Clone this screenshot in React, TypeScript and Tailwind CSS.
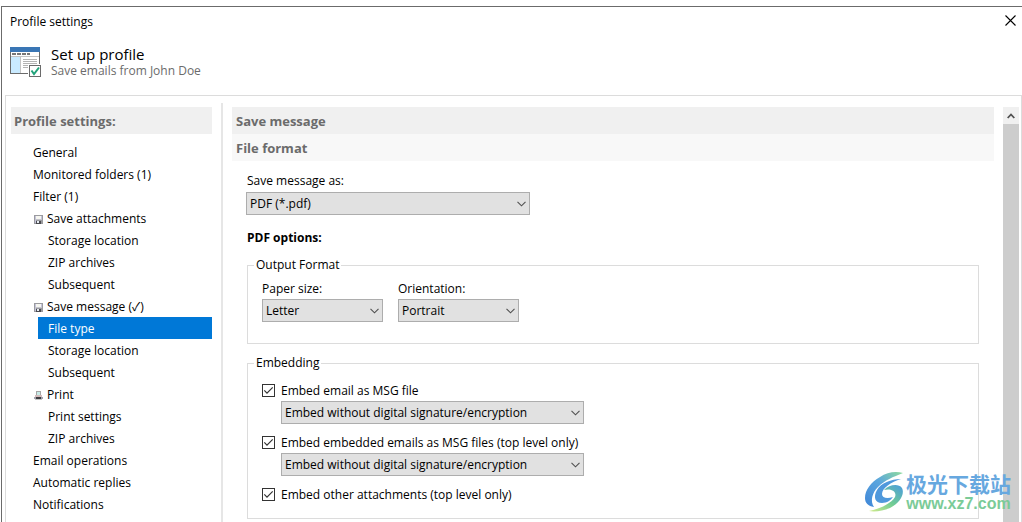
import type { ReactNode } from "react";

type TreeItem = { label: string; level: "root" | "group" | "child"; icon?: "disk" | "printer"; active?: boolean };

const TREE: TreeItem[] = [
  { label: "General", level: "root" },
  { label: "Monitored folders (1)", level: "root" },
  { label: "Filter (1)", level: "root" },
  { label: "Save attachments", level: "group", icon: "disk" },
  { label: "Storage location", level: "child" },
  { label: "ZIP archives", level: "child" },
  { label: "Subsequent", level: "child" },
  { label: "Save message (✓)", level: "group", icon: "disk" },
  { label: "File type", level: "child", active: true },
  { label: "Storage location", level: "child" },
  { label: "Subsequent", level: "child" },
  { label: "Print", level: "group", icon: "printer" },
  { label: "Print settings", level: "child" },
  { label: "ZIP archives", level: "child" },
  { label: "Email operations", level: "root" },
  { label: "Automatic replies", level: "root" },
  { label: "Notifications", level: "root" },
];

function ProfileIcon() {
  return (
    <svg width="32" height="32" viewBox="0 0 32 32" shapeRendering="crispEdges" aria-hidden="true">
      <rect x="0" y="2" width="30" height="27" fill="#6b6b6b" />
      <rect x="1" y="7" width="28" height="21" fill="#fff" />
      <rect x="0" y="2" width="30" height="5" fill="#3a76b5" />
      <path d="M2 8h4v2H2zM7 8h4v2H7zM12 8h4v2h-4zM17 8h3v2h-3z" fill="#777" />
      <rect x="1" y="12" width="9" height="16" fill="#c9eaff" />
      <path d="M1 11.5h28M10.5 12v16" stroke="#c4c4c4" />
      <path d="M13 14.5h14M13 16.5h14M13 18.5h14M13 20.5h6M13 22.5h6" stroke="#b4b4b4" />
      <rect x="18" y="19" width="14" height="13" fill="#fff" />
      <rect x="19.5" y="20.5" width="11" height="11" fill="#fff" stroke="#6b6b6b" />
      <path d="M21.5 25.5l2.5 3.5 5-6.5" fill="none" stroke="#21a37a" strokeWidth="2" shapeRendering="auto" />
    </svg>
  );
}

function DiskIcon() {
  return (
    <svg width="9" height="9" viewBox="0 0 9 9" shapeRendering="crispEdges" aria-hidden="true">
      <rect width="9" height="9" fill="#9b9b9f" />
      <rect x="1" y="1" width="1" height="7" fill="#c4c4dc" />
      <rect x="2" y="1" width="5" height="3" fill="#f6f6f0" />
      <rect x="7" y="1" width="1" height="3" fill="#c4c4dc" />
      <rect x="1" y="4" width="7" height="1" fill="#c5c5cd" />
      <rect x="2" y="6" width="5" height="3" fill="#4b4b50" />
      <rect x="3" y="6" width="2" height="2" fill="#e8eef4" />
    </svg>
  );
}

function PrinterIcon() {
  return (
    <svg width="9" height="9" viewBox="0 0 9 9" shapeRendering="crispEdges" aria-hidden="true">
      <path d="M2 0h5v5H2z" fill="#a6a6a6" />
      <path d="M3 1h3v3H3z" fill="#c8ece8" />
      <path d="M1 4h7v2H1z" fill="#d3bcbc" />
      <path d="M0 6h9v2H0z" fill="#a3a3ae" />
      <path d="M2 6h5v2H2z" fill="#3c3c40" />
      <path d="M1 8h7v1H1z" fill="#c5c5c5" />
    </svg>
  );
}

function SelectBox({ id, label, value, className }: { id: string; label?: string; value: string; className: string }) {
  return (
    <div className={`grid items-center ${className}`}>
      <select
        id={id}
        aria-label={label}
        className="col-start-1 row-start-1 h-[23px] w-full appearance-none rounded-none border border-[#adadad] bg-[#e1e1e1] pl-[3px] pr-5 text-black"
      >
        <option>{value}</option>
      </select>
      <svg className="pointer-events-none col-start-1 row-start-1 mr-1 justify-self-end" width="9" height="6" viewBox="0 0 9 6" aria-hidden="true">
        <path d="M0.5 0.8L4.5 4.8L8.5 0.8" fill="none" stroke="#505050" strokeWidth="1.1" />
      </svg>
    </div>
  );
}

function CheckRow({ id, label }: { id: string; label: string }) {
  return (
    <div className="flex h-5 items-start gap-[6px] pt-[3px]">
      <span className="grid">
        <input
          id={id}
          type="checkbox"
          defaultChecked
          className="peer col-start-1 row-start-1 size-[13px] appearance-none border border-[#333] bg-white"
        />
        <svg className="pointer-events-none invisible col-start-1 row-start-1 peer-checked:visible" width="13" height="13" viewBox="0 0 13 13" aria-hidden="true">
          <path d="M2.3 6.4L5 9.2L10.7 3.4" fill="none" stroke="#333" strokeWidth="1.2" />
        </svg>
      </span>
      <label htmlFor={id} className="leading-[14px]">{label}</label>
    </div>
  );
}

function Group({ title, children, className }: { title: string; children: ReactNode; className: string }) {
  return (
    <fieldset className={`min-w-0 border border-[#dcdcdc] px-[14px] ${className}`}>
      <legend className="-ml-2 px-[2px] leading-4">{title}</legend>
      {children}
    </fieldset>
  );
}

function Tree() {
  return (
    <ul className="mt-[7px]">
      {TREE.map((item, i) => (
        <li key={i} className={item.level === "child" ? "pl-[27px]" : "pl-[22px]"}>
          <a
            href="#"
            aria-current={item.active ? "page" : undefined}
            className={`flex h-[22px] items-center gap-1 pt-[2px] ${item.level === "child" ? "pl-[10px]" : item.level === "group" ? "pl-[1px]" : ""} ${
              item.active ? "bg-[#0078d7] text-white" : ""
            }`}
          >
            {item.icon === "disk" && <DiskIcon />}
            {item.icon === "printer" && <PrinterIcon />}
            {item.label}
          </a>
        </li>
      ))}
    </ul>
  );
}

function Watermark() {
  return (
    <div className="pointer-events-none absolute right-[11px] bottom-2 flex items-center">
      <svg width="44" height="44" viewBox="0 0 44 44" aria-hidden="true">
        <defs>
          <linearGradient id="wm-a" x1="0" y1="1" x2="1" y2="0">
            <stop offset="0" stopColor="#3f86d8" />
            <stop offset="0.55" stopColor="#5ba6de" />
            <stop offset="1" stopColor="#8fdc9c" />
          </linearGradient>
          <linearGradient id="wm-b" x1="0" y1="1" x2="1" y2="0">
            <stop offset="0" stopColor="#d3ec8c" />
            <stop offset="0.5" stopColor="#6fcb94" />
            <stop offset="1" stopColor="#4a9be0" />
          </linearGradient>
        </defs>
        <path d="M41 3C34 1 25 2 18 7C9 12 3 20 3 28C3 33 6 36 12 37C8 31 10 23 16 17C23 10 31 7 41 3Z" fill="url(#wm-a)" />
        <path d="M39 9C29 9 19 13 15 20C11 27 13 33 20 33C25 33 29 30 31 27C25 29 20 28 20 24C20 18 29 12 39 9Z" fill="#4f98dc" />
        <path d="M22 20C27 15 36 13 40 18C43 24 38 33 28 38C21 41 13 42 7 41C17 39 29 34 33 27C35 22 30 18 22 20Z" fill="url(#wm-b)" />
      </svg>
      <div className="text-center font-['Noto_Sans_CJK_SC',sans-serif]">
        <div className="text-[21px] leading-6 font-bold text-[#67a8df]">极光下载站</div>
        <div className="font-['Liberation_Sans',sans-serif] text-[16px] leading-[18px] font-bold text-[#7bcb98]">www.xz7.com</div>
      </div>
    </div>
  );
}

export default function App() {
  return (
    <div className="relative flex h-screen flex-col overflow-hidden bg-white pt-[6px] pl-px font-['Open_Sans','Noto_Sans_CJK_SC',sans-serif] text-[12px] leading-4 text-black">
      <div className="flex min-h-0 flex-1 flex-col border-t border-l border-[#6b6b6b] pl-[3px]">
        <header className="flex h-[30px] shrink-0 items-center justify-between pr-[5px] pl-[5px]">
          <h1>Profile settings</h1>
          <button type="button" aria-label="Close" className="px-px pb-[3px]">
            <svg width="11" height="11" viewBox="0 0 11 11" aria-hidden="true">
              <path d="M0.5 0.5l10 10M10.5 0.5l-10 10" stroke="#000" strokeWidth="1.1" />
            </svg>
          </button>
        </header>
        <div className="flex h-[58px] shrink-0 gap-[9px] pt-2 pl-[5px]">
          <ProfileIcon />
          <div>
            <h2 className="text-[15px] leading-[18px]">Set up profile</h2>
            <p className="text-[#6b6b6b]">Save emails from John Doe</p>
          </div>
        </div>
        <div className="flex min-h-0 flex-1 border border-b-0 border-[#dcdcdc] pt-[7px] pr-[2px] pl-[5px]">
          <nav className="w-[201px] shrink-0 pt-1">
            <h2 className="bg-[#f0f0f0] pt-px pl-[3px] text-[13px] leading-[26px] font-bold text-[#6b6b6b]">Profile settings:</h2>
            <Tree />
          </nav>
          <div className="ml-[9px] w-[2px] shrink-0 bg-[#e6e6e6]" />
          <main className="ml-[9px] min-w-0 flex-1 pt-1">
            <h2 className="bg-[#f0f0f0] pt-px pl-1 text-[13px] leading-[26px] font-bold text-[#6b6b6b]">Save message</h2>
            <h3 className="bg-[#f8f8f8] pt-px pl-1 text-[13px] leading-[26px] font-bold text-[#6b6b6b]">File format</h3>
            <div className="pt-3 pr-[15px] pl-[15px]">
              <label htmlFor="format" className="mb-[3px] block">Save message as:</label>
              <SelectBox id="format" value="PDF (*.pdf)" className="-ml-px w-[284px]" />
              <h4 className="mt-[15px] font-bold">PDF options:</h4>
              <Group title="Output Format" className="mt-[11px] pb-[21px]">
                <div className="flex gap-[15px] pt-2">
                  <div className="w-[121px]">
                    <label htmlFor="paper" className="mb-[2px] block">Paper size:</label>
                    <SelectBox id="paper" value="Letter" className="w-full" />
                  </div>
                  <div className="w-[121px]">
                    <label htmlFor="orientation" className="mb-[2px] block">Orientation:</label>
                    <SelectBox id="orientation" value="Portrait" className="w-full" />
                  </div>
                </div>
              </Group>
              <Group title="Embedding" className="mt-[11px] pb-[13px]">
                <div className="pt-[10px]">
                  <CheckRow id="embed-msg" label="Embed email as MSG file" />
                  <SelectBox id="embed-msg-mode" label="Email embedding mode" value="Embed without digital signature/encryption" className="mb-[9px] ml-[19px] w-[303px]" />
                  <CheckRow id="embed-nested" label="Embed embedded emails as MSG files (top level only)" />
                  <SelectBox id="embed-nested-mode" label="Embedded email mode" value="Embed without digital signature/encryption" className="mb-[9px] ml-[19px] w-[303px]" />
                  <CheckRow id="embed-other" label="Embed other attachments (top level only)" />
                </div>
              </Group>
            </div>
          </main>
          <div className="mt-1 ml-[9px] flex w-4 shrink-0 flex-col bg-[#f0f0f0]">
            <button type="button" aria-label="Scroll up" className="flex h-[17px] shrink-0 items-center justify-center">
              <svg width="8" height="6" viewBox="0 0 8 6" aria-hidden="true">
                <path d="M0.7 5L4 1.5L7.3 5" fill="none" stroke="#505050" strokeWidth="1.8" />
              </svg>
            </button>
            <div className="flex-1 bg-[#cdcdcd]" />
          </div>
        </div>
      </div>
      <Watermark />
    </div>
  );
}
